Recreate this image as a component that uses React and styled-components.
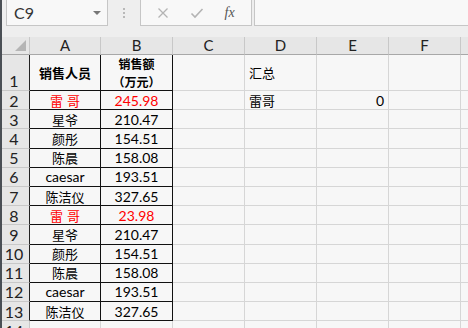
import React from "react";
import styled, { createGlobalStyle } from "styled-components";

const GlobalStyle = createGlobalStyle`
  html, body {
    margin: 0;
    padding: 0;
    background: #f0f0f0;
    overflow: hidden;
  }
  body {
    font-family: Lato, "Noto Sans CJK SC", sans-serif;
  }
`;

const COLS = ["A", "B", "C", "D", "E", "F"];

const rows = [
  ["雷 哥", "245.98", true],
  ["星爷", "210.47"],
  ["颜彤", "154.51"],
  ["陈晨", "158.08"],
  ["caesar", "193.51"],
  ["陈洁仪", "327.65"],
  ["雷 哥", "23.98", true],
  ["星爷", "210.47"],
  ["颜彤", "154.51"],
  ["陈晨", "158.08"],
  ["caesar", "193.51"],
  ["陈洁仪", "327.65"],
];

const Window = styled.div`
  width: 468px;
  height: 328px;
  overflow: hidden;
  border-left: 2px solid #4a4f55;
  box-sizing: border-box;
  background: #eeeeee;
`;

const FormulaBar = styled.div`
  display: flex;
  align-items: stretch;
  height: 26px;
`;

const Box = styled.div`
  display: flex;
  align-items: center;
  background: #f8f8f8;
  border: 1px solid #c6c6c6;
  border-top: none;
  box-sizing: border-box;
  height: 26px;
`;

const NameBox = styled(Box)`
  width: 102px;
  margin-left: 4px;
  padding: 0 6px 0 7px;
  justify-content: space-between;
  font-family: Lato, sans-serif;
  font-size: 16px;
  color: #333;
`;

const Caret = styled.span`
  width: 0;
  height: 0;
  border-left: 4px solid transparent;
  border-right: 4px solid transparent;
  border-top: 4px solid #777;
`;

const Dots = styled.div`
  width: 32px;
  display: flex;
  flex-direction: column;
  align-items: center;
  justify-content: center;
  gap: 2px;
  span {
    width: 2px;
    height: 2px;
    background: #b8b8b8;
  }
`;

const ActionBox = styled(Box)`
  width: 112px;
  justify-content: space-around;
  padding: 0 6px;
`;

const Fx = styled.span`
  font-family: "Liberation Serif", serif;
  font-style: italic;
  font-size: 14px;
  color: #555;
`;

const InputBox = styled(Box)`
  flex: 1;
  margin-left: 2px;
  border-right: none;
`;

const Sheet = styled.div`
  display: grid;
  grid-template-columns: 28px 71px 72px 72px 72px 72px 72px 1fr;
  grid-template-rows: 18px 36px repeat(13, 19.2px);
  margin-top: 11px;
  background: #f7f7f7;
`;

const ColHead = styled.div`
  background: #e6e6e6;
  border-right: 1px solid #c8c8c8;
  border-bottom: 1px solid #a8a8a8;
  display: flex;
  align-items: flex-end;
  justify-content: center;
  font-size: 15px;
  line-height: 17px;
  color: #222;
  box-sizing: border-box;
  position: relative;
`;

const Corner = styled(ColHead)`
  &::after {
    content: "";
    position: absolute;
    right: 3px;
    bottom: 3px;
    border-left: 11px solid transparent;
    border-bottom: 11px solid #b5b5b5;
  }
`;

const RowHead = styled.div`
  background: #e6e6e6;
  border-right: 1px solid ${(p) => (p.$edge ? "#222" : "#c8c8c8")};
  border-bottom: 1px solid #c8c8c8;
  display: flex;
  align-items: ${(p) => (p.$bottom ? "flex-end" : "center")};
  justify-content: center;
  padding-right: 3px;
  font-size: 16px;
  line-height: 19px;
  color: #222;
  box-sizing: border-box;
`;

const Cell = styled.div`
  border-right: 1px solid ${(p) => (p.$boxed ? "#111" : "#d6d6d6")};
  border-bottom: 1px solid ${(p) => (p.$boxed ? "#111" : "#d6d6d6")};
  box-sizing: border-box;
  display: flex;
  flex-direction: column;
  align-items: ${(p) =>
    p.$align === "right" ? "flex-end" : p.$align === "left" ? "flex-start" : "center"};
  justify-content: center;
  padding: 0 4px;
  font-size: 14px;
  font-weight: ${(p) => (p.$bold ? 700 : 400)};
  color: ${(p) => (p.$red ? "#ff0000" : "#000")};
  line-height: 17px;
  white-space: nowrap;
  overflow: ${(p) => (p.$wrap ? "visible" : "hidden")};
`;

const Han = styled.span`
  font-family: "Noto Sans CJK SC", sans-serif;
  font-size: 13px;
  line-height: 17px;
`;

const WrapLine = styled(Han)`
  font-size: 12px;
  line-height: 18px;
`;

const Spacer = styled.span`
  display: inline-block;
  width: ${(p) => p.$w}px;
`;

function Name({ text }) {
  if (text === "caesar") return <span>{text}</span>;
  const parts = text.split(" ");
  if (parts.length > 1)
    return (
      <Han>
        {parts[0]}
        <Spacer $w={4} />
        {parts[1]}
      </Han>
    );
  return <Han>{text}</Han>;
}

function emptyCells(rowKey, from = 2) {
  return COLS.slice(from)
    .map((c) => <Cell key={rowKey + c} />)
    .concat(<Cell key={rowKey + "tail"} />);
}

export default function App() {
  return (
    <>
      <GlobalStyle />
      <Window>
        <FormulaBar>
          <NameBox>
            C9
            <Caret />
          </NameBox>
          <Dots>
            <span />
            <span />
            <span />
          </Dots>
          <ActionBox>
            <svg width="12" height="12" viewBox="0 0 12 12">
              <path d="M1.5 1.5 L10.5 10.5 M10.5 1.5 L1.5 10.5" stroke="#b4b4b4" strokeWidth="1.3" fill="none" />
            </svg>
            <svg width="14" height="12" viewBox="0 0 14 12">
              <path d="M1.5 6.5 L5 10 L12.5 2" stroke="#b4b4b4" strokeWidth="1.6" fill="none" />
            </svg>
            <Fx>fx</Fx>
          </ActionBox>
          <InputBox />
        </FormulaBar>
        <Sheet>
          <Corner />
          {COLS.map((c) => (
            <ColHead key={c}>{c}</ColHead>
          ))}
          <ColHead />

          <RowHead $bottom $edge>1</RowHead>
          <Cell $boxed $bold>
            <Han>销售人员</Han>
          </Cell>
          <Cell $boxed $bold $wrap>
            <WrapLine>销售额</WrapLine>
            <WrapLine>（万元）</WrapLine>
          </Cell>
          <Cell />
          <Cell $align="left">
            <Han>汇总</Han>
          </Cell>
          <Cell />
          <Cell />
          <Cell />

          {rows.map(([name, amount, red], i) => (
            <React.Fragment key={i}>
              <RowHead $edge>{i + 2}</RowHead>
              <Cell $boxed $red={red}>
                <Name text={name} />
              </Cell>
              <Cell $boxed $red={red}>
                {amount}
              </Cell>
              {i === 0 ? (
                <>
                  <Cell />
                  <Cell $align="left">
                    <Han>雷哥</Han>
                  </Cell>
                  <Cell $align="right">0</Cell>
                  <Cell />
                  <Cell />
                </>
              ) : (
                emptyCells("r" + i)
              )}
            </React.Fragment>
          ))}

          <RowHead>14</RowHead>
          {emptyCells("r14", 0)}
        </Sheet>
      </Window>
    </>
  );
}
